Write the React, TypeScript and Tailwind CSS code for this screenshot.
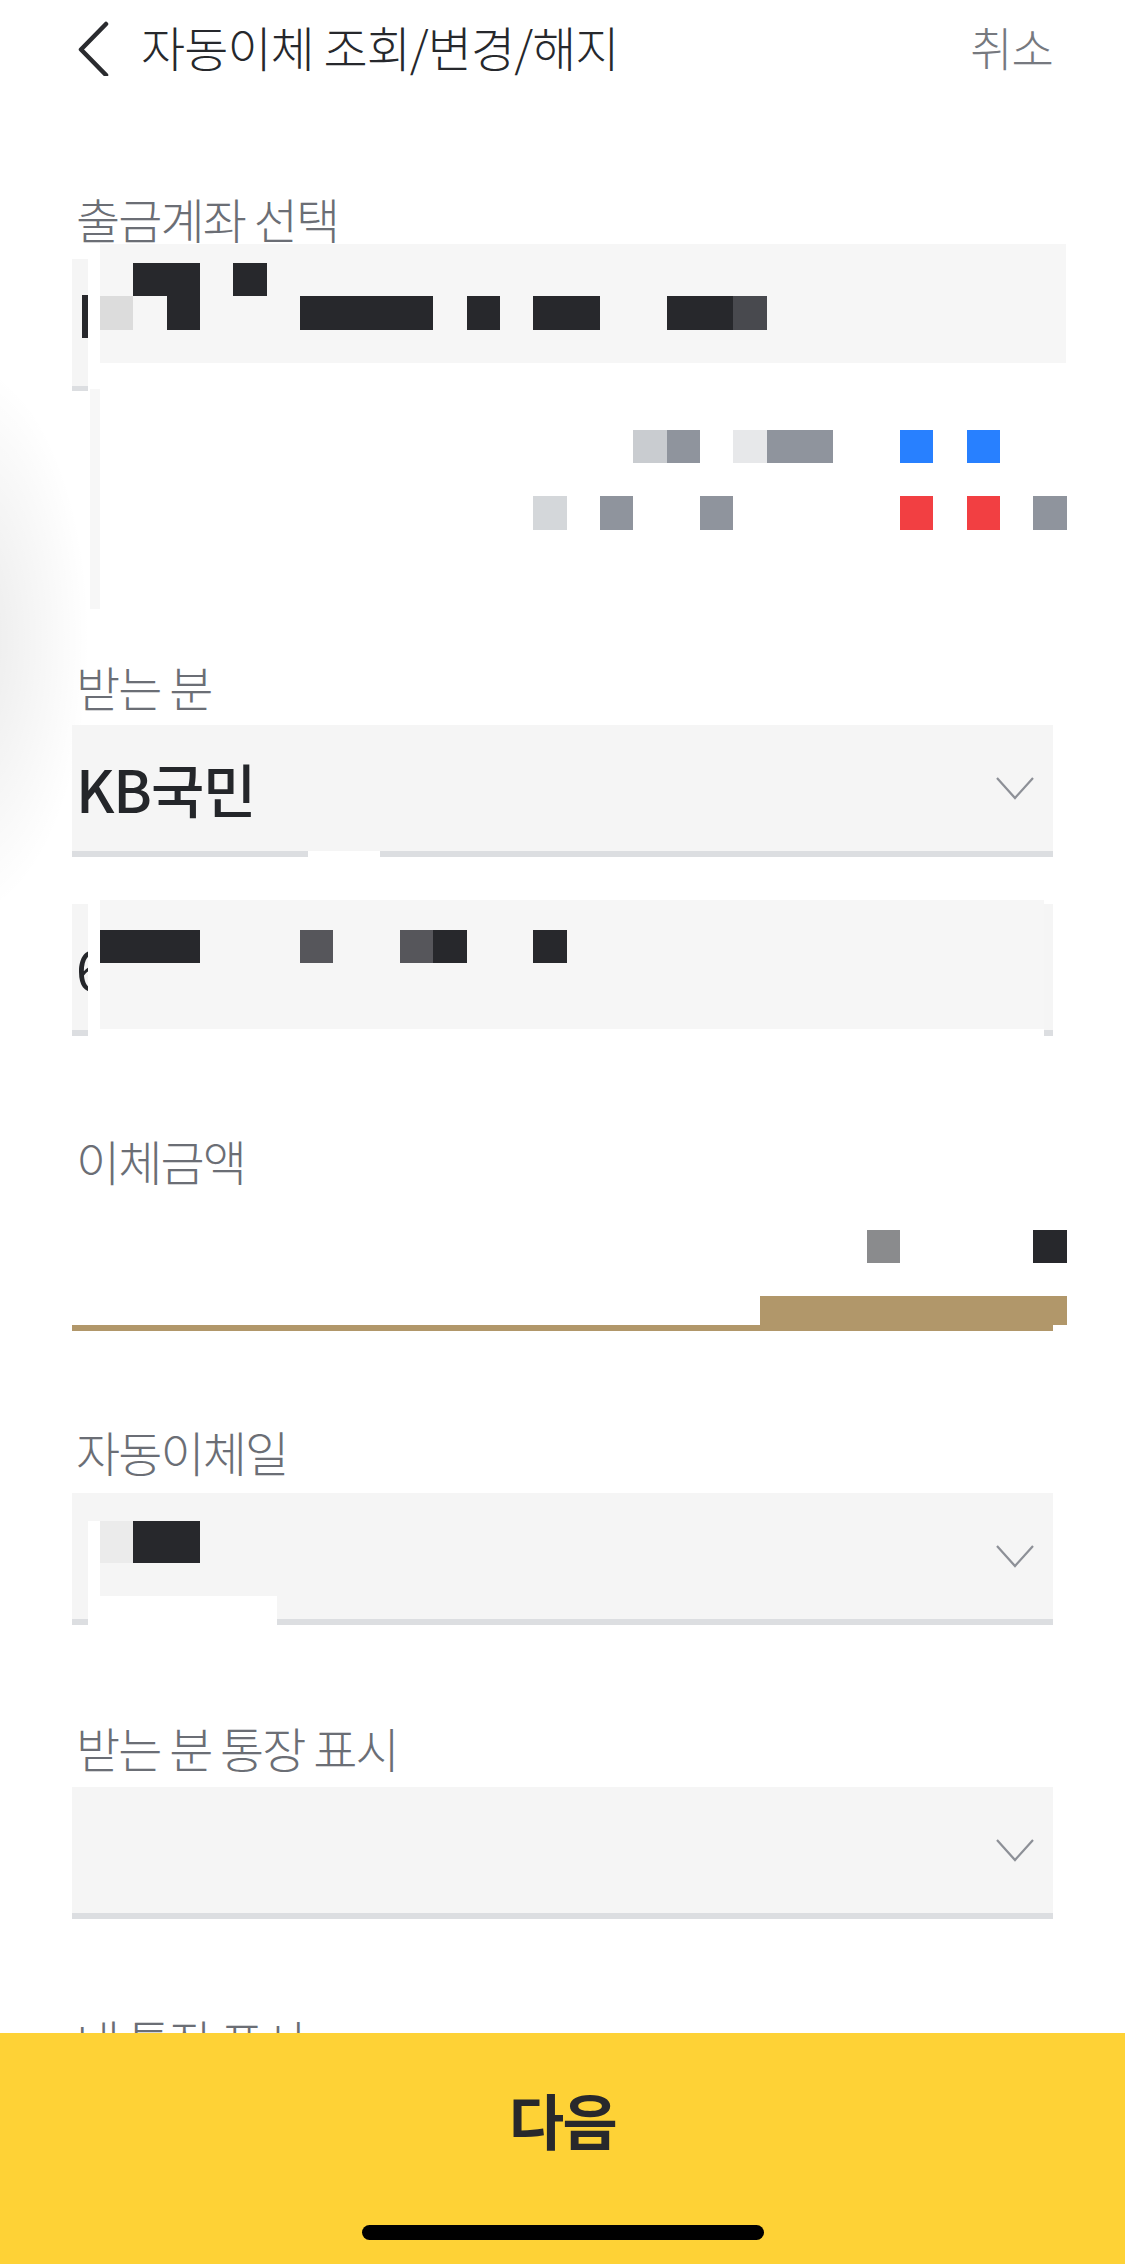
import React from 'react';

const CELL: Record<string, string> = {
  '.': '',
  D: 'bg-[#27282c]',
  L: 'bg-[#dcdcdc]',
  g: 'bg-[#48494e]',
  a: 'bg-[#c9ccd0]',
  b: 'bg-[#8f949d]',
  c: 'bg-[#e7e8ea]',
  e: 'bg-[#d4d7da]',
  B: 'bg-[#2880ff]',
  R: 'bg-[#f23f42]',
  n: 'bg-[#8a8b8d]',
  m: 'bg-[#56565b]',
  k: 'bg-[#ebebeb]',
};

// redacted pixel blocks, one char per 33.3px cell
function Mosaic({ row, className = 'h-[33.333px]' }: { row: string; className?: string }) {
  return (
    <div className={`flex ${className}`}>
      {row.split('').map((c, i) => (
        <div key={i} className={`w-[33.333px] shrink-0 ${CELL[c]}`} />
      ))}
    </div>
  );
}

function Label({ children, className = '' }: { children: React.ReactNode; className?: string }) {
  return (
    <div className={`h-[48px] pl-[4px] text-[48px] font-light leading-none tracking-[-0.04em] whitespace-nowrap text-[#6b6e75] ${className}`}>
      {children}
    </div>
  );
}

function ChevronDown() {
  return (
    <svg width="40" height="24" viewBox="0 0 40 24" className="shrink-0">
      <polyline points="2,2 20,22 38,2" fill="none" stroke="#8d9097" strokeWidth="2.2" strokeLinejoin="miter" />
    </svg>
  );
}

function SelectBox({ children, className = '' }: { children?: React.ReactNode; className?: string }) {
  return (
    <div className={`relative flex h-[132px] items-center justify-between border-b-[6px] border-[#dcdee1] bg-[#f5f5f5] pl-[4px] pr-[18px] ${className}`}>
      <div className="min-w-0">{children}</div>
      <ChevronDown />
    </div>
  );
}

export default function App() {
  return (
    <div className="relative h-[2264px] w-[1125px] overflow-hidden bg-white font-['Noto_Sans_CJK_KR',sans-serif]">
      {/* soft shadow bleeding in from the left edge */}
      <div className="pointer-events-none absolute left-[-170px] top-[360px] h-[560px] w-[260px] rounded-full bg-[radial-gradient(closest-side,rgba(0,0,0,0.09),rgba(0,0,0,0))]" />

      {/* Header */}
      <div className="flex h-[92px] items-center pl-[76px] pr-[72px]">
        <svg width="40" height="60" viewBox="0 0 40 60" className="shrink-0">
          <polyline points="30,8 5,33.5 30,59" fill="none" stroke="#2a2b2f" strokeWidth="4.5" strokeLinecap="round" strokeLinejoin="round" />
        </svg>
        <h1 className="ml-[25px] text-[48px] font-light leading-none tracking-[-0.02em] text-[#26282c] whitespace-nowrap">
          자동이체 조회/변경/해지
        </h1>
        <button className="ml-auto text-[46px] font-light leading-none tracking-[-0.02em] text-[#76797f]">취소</button>
      </div>

      <div className="px-[72px]">
        {/* 출금계좌 */}
        <Label className="mt-[102px]">출금계좌 선택</Label>
        <div className="relative mt-[17px] h-[132px] border-b-[5px] border-[#dcdee1] bg-[#f5f5f5] pl-[10px] pt-[36px]">
          <div className="h-[43px] w-[6px] bg-[#27282c]" />
          <div className="absolute left-[16px] top-[-15px] h-[365px] w-[978px] bg-white pl-[12px]">
            <div className="absolute left-[2px] top-[145px] h-[220px] w-[10px] bg-[#f7f7f7]" />
            <div className="h-[119px] bg-[#f6f6f6] pt-[19px]">
              <Mosaic row=".DD.D" />
              <Mosaic row="L.D...DDDD.D.DD..DDg" />
            </div>
            <div className="mt-[66.7px]">
              <Mosaic row="................ab.cbb..B.B" />
              <div className="h-[33.333px]" />
              <Mosaic row=".............e.b..b.....R.R.b" />
            </div>
          </div>
        </div>

        {/* 받는 분 */}
        <Label className="mt-[271px]">받는 분</Label>
        <SelectBox className="mt-[15px]">
          <span className="text-[58px] font-medium leading-none tracking-[-0.02em] text-[#24262a]">KB국민</span>
          <div className="absolute bottom-[-6px] left-[236px] h-[6px] w-[72px] bg-white" />
        </SelectBox>
        <div className="relative mt-[47px] flex h-[132px] items-center border-b-[6px] border-[#dcdee1] bg-[#f5f5f5] pl-[4px]">
          <span className="text-[56px] leading-none text-[#24262a]">6</span>
          <div className="absolute left-[16px] top-[-5px] h-[137px] w-[956px] bg-white pl-[12px] pt-[1px]">
            <div className="h-[129px] bg-[#f6f6f6] pt-[30px]">
              <Mosaic row="DDD...m..mD..D" />
            </div>
          </div>
        </div>

        {/* 이체금액 */}
        <Label className="mt-[100px]">이체금액</Label>
        <div className="mt-[46px] pl-[28px]">
          <Mosaic row=".......................n....D" />
        </div>
        <div className="ml-[688px] mt-[33px] h-[29px] w-[307px] bg-[#b1976a]" />
        <div className="h-[6px] bg-[#b1976a]" />

        {/* 자동이체일 */}
        <Label className="mt-[96px]">자동이체일</Label>
        <SelectBox className="mt-[18px]">
          <div className="absolute left-[16px] top-[28px] h-[104px] w-[12px] bg-white" />
          <div className="absolute left-[28px] top-[28px]">
            <Mosaic row="kDD" className="h-[42px]" />
          </div>
          <div className="absolute left-[16px] top-[103px] h-[29px] w-[189px] bg-white" />
        </SelectBox>

        {/* 받는 분 통장 표시 */}
        <Label className="mt-[98px]">받는 분 통장 표시</Label>
        <SelectBox className="mt-[16px] h-[131px]" />

        <Label className="mt-[97px]">내 통장 표시</Label>
      </div>

      {/* bottom action */}
      <div className="absolute bottom-0 left-0 h-[231px] w-full bg-[#fed236]">
        <div className="flex justify-center pt-[56px]">
          <span className="text-[60px] font-bold leading-none tracking-[-0.03em] text-[#28282c]">다음</span>
        </div>
        <div className="absolute bottom-[24px] left-[362px] h-[15px] w-[402px] rounded-full bg-black" />
      </div>
    </div>
  );
}
